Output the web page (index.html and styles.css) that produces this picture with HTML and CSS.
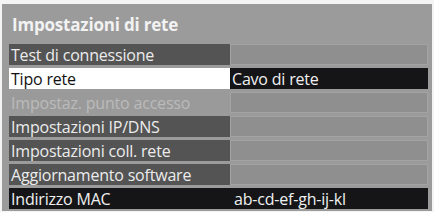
FILE: index.html
```html
<!DOCTYPE html>
<html lang="it">
<head>
<meta charset="utf-8">
<title>Impostazioni di rete</title>
<link rel="stylesheet" href="styles.css">
</head>
<body>
<div class="panel">
  <div class="title">Impostazioni di rete</div>
  <div class="rows">
    <div class="label dark">Test di connessione</div><div class="value"></div>
    <div class="label selected">Tipo rete</div><div class="value black">Cavo di rete</div>
    <div class="label disabled">Impostaz. punto accesso</div><div class="value"></div>
    <div class="label dark">Impostazioni IP/DNS</div><div class="value"></div>
    <div class="label dark">Impostazioni coll. rete</div><div class="value"></div>
    <div class="label dark">Aggiornamento software</div><div class="value"></div>
    <div class="label black">Indirizzo MAC</div><div class="value black mac">ab-cd-ef-gh-ij-kl</div>
  </div>
</div>
</body>
</html>
```
FILE: styles.css
```css
html, body {
  margin: 0;
  padding: 0;
  background: #f4f4f4;
}
body {
  width: 434px;
  height: 212px;
  overflow: hidden;
  font-family: "Open Sans", "Noto Sans", sans-serif;
}
.panel {
  margin: 4px 2px 0 2px;
  height: 207px;
  box-sizing: border-box;
  background: #9b9b9b;
  padding: 0 4px 2px 7px;
}
.title {
  height: 40px;
  display: flex;
  align-items: center;
  padding-left: 3px;
  font-weight: 700;
  font-size: 17px;
  letter-spacing: -0.2px;
  color: #f2f2f2;
}
.rows {
  display: grid;
  grid-template-columns: 221px 1fr;
  grid-auto-rows: 21px;
  row-gap: 3px;
}
.label, .value {
  display: flex;
  align-items: center;
  padding-left: 2px;
  font-size: 16px;
  letter-spacing: -0.2px;
  white-space: nowrap;
  overflow: hidden;
}
.value {
  background: #8f8f8f;
  box-shadow: inset 0 0 0 1px #a3a3a3;
}
.dark {
  background: #545454;
  color: #ececec;
}
.selected {
  background: #ffffff;
  color: #111111;
}
.disabled {
  background: #9a9a9a;
  color: #bababa;
}
.black {
  background: #151518;
  color: #f0f0f0;
  box-shadow: none;
}
.mac {
  padding-left: 4px;
}
```
